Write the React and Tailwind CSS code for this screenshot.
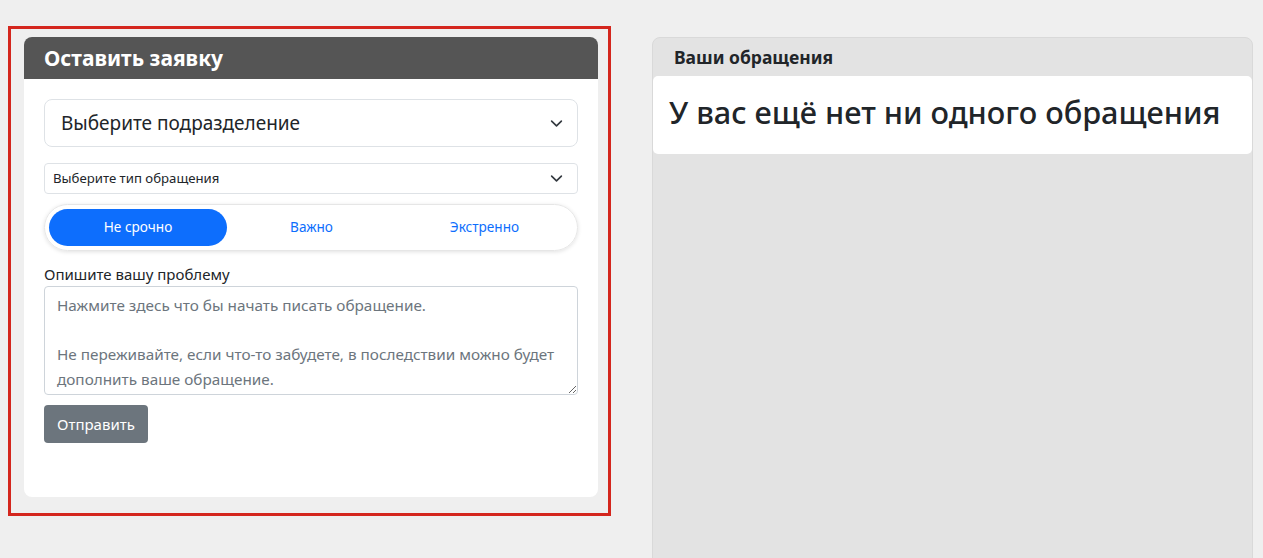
import React, { useState } from 'react';

const FONT = { fontFamily: '"Noto Sans", "Open Sans", sans-serif' };

const Chevron = ({ className }) => (
  <svg viewBox="0 0 16 16" className={className} fill="none" stroke="#343a40" strokeWidth="2" strokeLinecap="round" strokeLinejoin="round">
    <path d="M2 5l6 6 6-6" />
  </svg>
);

const PRIORITIES = ['Не срочно', 'Важно', 'Экстренно'];

export default function App() {
  const [priority, setPriority] = useState(0);

  return (
    <div className="w-[1263px] h-[558px] overflow-hidden bg-[#efefef] flex items-start text-[#212529]" style={FONT}>
      {/* ─── Left: request form ─── */}
      <div className="ml-[8px] mt-[26px] w-[603px] border-[3px] border-[#d4261d] pt-[8px] pl-[13px] pr-[10px] pb-[16px]">
        <div className="w-[574px] bg-white rounded-[8px] overflow-hidden">
          <div className="h-[42px] bg-[#555555] flex items-center px-5">
            <h2 className="text-[21px] font-bold text-white leading-none">Оставить заявку</h2>
          </div>

          <div className="px-5 pt-5 pb-[54px] flex flex-col">
            <div className="h-[48px] border border-[#dee2e6] rounded-[8px] flex items-center justify-between pl-4 pr-[14px]">
              <span className="text-[19px]">Выберите подразделение</span>
              <Chevron className="w-[13px] h-[13px]" />
            </div>

            <div className="mt-4 h-[31px] border border-[#dee2e6] rounded-[4px] flex items-center justify-between pl-2 pr-[14px]">
              <span className="text-[13.2px]">Выберите тип обращения</span>
              <Chevron className="w-[13px] h-[13px]" />
            </div>

            <div className="mt-[10px] h-[47px] rounded-full border border-[#e6e6e6] shadow-[0_1px_4px_rgba(0,0,0,0.12)] p-[4px] grid grid-cols-[178px_1fr_1fr]">
              {PRIORITIES.map((p, i) => (
                <button
                  key={p}
                  onClick={() => setPriority(i)}
                  className={
                    i === priority
                      ? 'rounded-full bg-[#0d6efd] text-white text-[13.6px]'
                      : 'rounded-full text-[#0d6efd] text-[13.6px] pr-1'
                  }
                >
                  {p}
                </button>
              ))}
            </div>

            <label className="mt-[13px] text-[15px] leading-[21px]">Опишите вашу проблему</label>
            <textarea
              className="mt-[1px] h-[109px] border border-[#ced4da] rounded-[4px] px-3 pt-[6px] text-[15.3px] leading-[24.5px] placeholder:text-[#6c757d] resize-y outline-none"
              placeholder={'Нажмите здесь что бы начать писать обращение.\n\nНе переживайте, если что-то забудете, в последствии можно будет дополнить ваше обращение.'}
            />

            <div className="mt-[10px]">
              <button className="h-[38px] px-[13px] bg-[#6c757d] text-white text-[15px] rounded-[4px]">Отправить</button>
            </div>
          </div>
        </div>
      </div>

      {/* ─── Right: user requests ─── */}
      <div className="ml-[41px] mt-[37px] w-[601px] h-[540px] bg-[#e3e3e3] border border-[#d9d9d9] rounded-t-[8px] flex flex-col">
        <div className="h-[38px] flex items-center px-[21px]">
          <h3 className="text-[17.5px] font-bold">Ваши обращения</h3>
        </div>
        <div className="h-[78px] bg-white rounded-[5px] flex items-center px-4 pb-[6px]">
          <p className="text-[30.7px] font-medium">У вас ещё нет ни одного обращения</p>
        </div>
      </div>
    </div>
  );
}
